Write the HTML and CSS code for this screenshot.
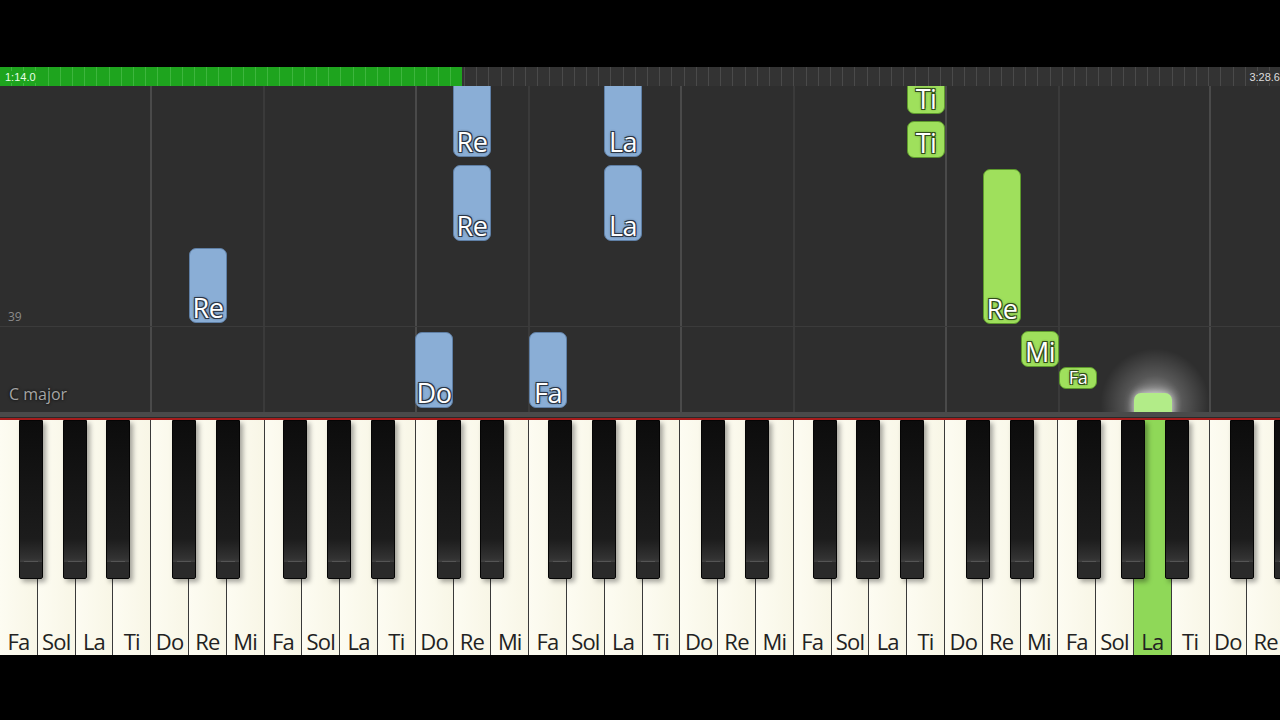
FILE: index.html
```html
<!DOCTYPE html>
<html lang="en">
<head>
    <meta charset="UTF-8">
    <title>Piano Roll - Solfege</title>
    <link rel="stylesheet" href="styles.css">
</head>
<body>
    <div class="screen">
        <div class="letterbox"></div>

        <div class="timeline">
            <div class="played"><span class="time">1:14.0</span></div>
            <div class="remaining"><span class="time end">3:28.6</span></div>
        </div>

        <div class="roll">
            <!-- bar and beat lines -->
            <div class="vline bar" style="left:150px"></div>
            <div class="vline beat" style="left:263px"></div>
            <div class="vline bar" style="left:415px"></div>
            <div class="vline beat" style="left:528px"></div>
            <div class="vline bar" style="left:680px"></div>
            <div class="vline beat" style="left:793px"></div>
            <div class="vline bar" style="left:945px"></div>
            <div class="vline beat" style="left:1058px"></div>
            <div class="vline bar" style="left:1209px"></div>
            <div class="hline"></div>

            <span class="measure">39</span>
            <span class="key-sig">C major</span>

            <!-- left hand (blue) -->
            <div class="note blue" style="left:189px; top:162px; height:75px;"><span>Re</span></div>
            <div class="note blue" style="left:453px; top:-10px; height:81px;"><span>Re</span></div>
            <div class="note blue" style="left:453px; top:79px; height:76px;"><span>Re</span></div>
            <div class="note blue" style="left:604px; top:-10px; height:81px;"><span>La</span></div>
            <div class="note blue" style="left:604px; top:79px; height:76px;"><span>La</span></div>
            <div class="note blue" style="left:415px; top:246px; height:76px;"><span>Do</span></div>
            <div class="note blue" style="left:529px; top:246px; height:76px;"><span>Fa</span></div>

            <!-- right hand (green) -->
            <div class="note green" style="left:907px; top:-20px; height:48px;"><span>Ti</span></div>
            <div class="note green" style="left:907px; top:35px; height:37px;"><span>Ti</span></div>
            <div class="note green" style="left:983px; top:83px; height:155px;"><span>Re</span></div>
            <div class="note green" style="left:1021px; top:245px; height:36px;"><span>Mi</span></div>
            <div class="note green small" style="left:1059px; top:281px; height:22px;"><span>Fa</span></div>
            <div class="glow"></div>
            <div class="note green active" style="left:1134px; top:307px; height:30px;"></div>
        </div>

        <div class="rail"></div>

        <div class="keyboard">
            <div class="white">Fa<i class="black f"></i></div>
            <div class="white">Sol<i class="black g"></i></div>
            <div class="white">La<i class="black a"></i></div>
            <div class="white">Ti</div>
            <div class="white">Do<i class="black c"></i></div>
            <div class="white">Re<i class="black d"></i></div>
            <div class="white">Mi</div>
            <div class="white">Fa<i class="black f"></i></div>
            <div class="white">Sol<i class="black g"></i></div>
            <div class="white">La<i class="black a"></i></div>
            <div class="white">Ti</div>
            <div class="white">Do<i class="black c"></i></div>
            <div class="white">Re<i class="black d"></i></div>
            <div class="white">Mi</div>
            <div class="white">Fa<i class="black f"></i></div>
            <div class="white">Sol<i class="black g"></i></div>
            <div class="white">La<i class="black a"></i></div>
            <div class="white">Ti</div>
            <div class="white">Do<i class="black c"></i></div>
            <div class="white">Re<i class="black d"></i></div>
            <div class="white">Mi</div>
            <div class="white">Fa<i class="black f"></i></div>
            <div class="white">Sol<i class="black g"></i></div>
            <div class="white">La<i class="black a"></i></div>
            <div class="white">Ti</div>
            <div class="white">Do<i class="black c"></i></div>
            <div class="white">Re<i class="black d"></i></div>
            <div class="white">Mi</div>
            <div class="white">Fa<i class="black f"></i></div>
            <div class="white">Sol<i class="black g"></i></div>
            <div class="white pressed">La<i class="black a"></i></div>
            <div class="white">Ti</div>
            <div class="white">Do<i class="black c"></i></div>
            <div class="white">Re<i class="black d"></i></div>
        </div>

        <div class="letterbox bottom"></div>
    </div>
</body>
</html>
```

FILE: styles.css
```css
body {
    margin: 0;
    padding: 0;
    background: #000000;
    font-family: 'Open Sans', 'Noto Sans', sans-serif;
    overflow: hidden;
}
.screen {
    width: 1280px;
    height: 720px;
    display: flex;
    flex-direction: column;
    overflow: hidden;
}
.letterbox {
    height: 67px;
    flex: 0 0 67px;
    background: #000000;
}
.letterbox.bottom {
    flex: 1 1 auto;
}

/* timeline */
.timeline {
    display: flex;
    height: 19px;
    flex: 0 0 19px;
}
.played {
    width: 462px;
    background-color: #1ea41e;
    background-image: repeating-linear-gradient(90deg, transparent 0 11px, rgba(120, 215, 120, 0.35) 11px 12px, transparent 12px 12.2px);
    display: flex;
    align-items: center;
}
.remaining {
    flex: 1;
    background-color: #333333;
    background-image: repeating-linear-gradient(90deg, transparent 0 2px, #4a4a4a 2px 3px, transparent 3px 12.2px);
    display: flex;
    align-items: center;
    justify-content: flex-end;
}
.time {
    font-family: 'Liberation Sans', sans-serif;
    font-size: 11px;
    color: #e8ffe8;
    padding-left: 5px;
    padding-right: 2px;
    background: #1ea41e;
}
.time.end {
    background: #333333;
    color: #dddddd;
    padding-left: 3px;
    padding-right: 0;
}

/* piano roll */
.roll {
    position: relative;
    height: 326px;
    flex: 0 0 326px;
    background: #2e2e2e;
    overflow: hidden;
}
.vline {
    position: absolute;
    top: 0;
    bottom: 0;
    width: 2px;
}
.vline.bar {
    background: #4a4a4a;
}
.vline.beat {
    background: #3a3a3a;
}
.hline {
    position: absolute;
    left: 0;
    right: 0;
    top: 240px;
    height: 1px;
    background: #3b3b3b;
}
.measure {
    position: absolute;
    left: 8px;
    top: 222px;
    font-size: 12px;
    color: #8a8a8a;
}
.key-sig {
    position: absolute;
    left: 9px;
    top: 297px;
    font-size: 16px;
    color: #a5a5a5;
    text-shadow: 0 0 3px #000000;
}
.note {
    position: absolute;
    width: 38px;
    box-sizing: border-box;
    border-radius: 7px;
    display: flex;
    align-items: flex-end;
    justify-content: center;
}
.note span {
    font-size: 27px;
    line-height: 27px;
    padding-bottom: 1px;
    color: #ffffff;
    letter-spacing: -0.5px;
    text-shadow: -1px -1px 0 #2a3545, 1px -1px 0 #2a3545, -1px 1px 0 #2a3545, 1px 1px 0 #2a3545, 0 0 3px #1d2530;
}
.note.blue {
    background: #8aaed6;
    border: 1px solid #5f7fa5;
}
.note.green {
    background: #9fe05c;
    border: 1px solid #5d9a2c;
}
.note.green span {
    text-shadow: -1px -1px 0 #2f4a1a, 1px -1px 0 #2f4a1a, -1px 1px 0 #2f4a1a, 1px 1px 0 #2f4a1a, 0 0 3px #203312;
}
.note.small span {
    font-size: 18px;
    line-height: 19px;
}
.note.active {
    background: #b2ec88;
    border: none;
    box-shadow: 0 0 10px rgba(255, 255, 255, 0.8);
}
.glow {
    position: absolute;
    left: 1100px;
    top: 262px;
    width: 110px;
    height: 110px;
    border-radius: 50%;
    background: radial-gradient(circle, rgba(255, 255, 255, 0.6) 0%, rgba(255, 255, 255, 0.2) 35%, rgba(255, 255, 255, 0) 70%);
}

/* rail between roll and keys */
.rail {
    height: 8px;
    flex: 0 0 8px;
    background: linear-gradient(#4a4a4a 0 5px, #2a2a2a 5px 6px, #a51c1c 6px 8px);
}

/* keyboard */
.keyboard {
    position: relative;
    display: flex;
    height: 235px;
    flex: 0 0 235px;
    background: #fbf9ec;
    overflow: hidden;
}
.white {
    position: relative;
    flex: 0 0 37.8px;
    box-sizing: border-box;
    border-right: 1px solid #3a3a3a;
    background: linear-gradient(90deg, #fdfcf2, #f8f6e6);
    display: flex;
    align-items: flex-end;
    justify-content: center;
    font-size: 22px;
    line-height: 28px;
    color: #222222;
    letter-spacing: -0.8px;
}
.white.pressed {
    background: #8fd858;
}
.black {
    position: absolute;
    top: 0;
    width: 24px;
    height: 159px;
    box-sizing: border-box;
    border: 1px solid #050505;
    border-radius: 0 0 2px 2px;
    background:
        linear-gradient(#2a2a2a, #2a2a2a) bottom / 100% 16px no-repeat,
        linear-gradient(#0c0c0c 0%, #1c1c1c 75%, #333333 88%, #3f3f3f 89.5%, #2a2a2a 90%);
    box-shadow: 3px 3px 5px rgba(0, 0, 0, 0.35);
    z-index: 2;
}
.black::after {
    content: '';
    position: absolute;
    left: 4px;
    right: 4px;
    bottom: 16px;
    height: 1px;
    background: #555555;
}
.black.c { left: calc(100% - 16px); }
.black.d { left: calc(100% - 10px); }
.black.f { left: calc(100% - 18px); }
.black.g { left: calc(100% - 12px); }
.black.a { left: calc(100% - 6px); }
```
